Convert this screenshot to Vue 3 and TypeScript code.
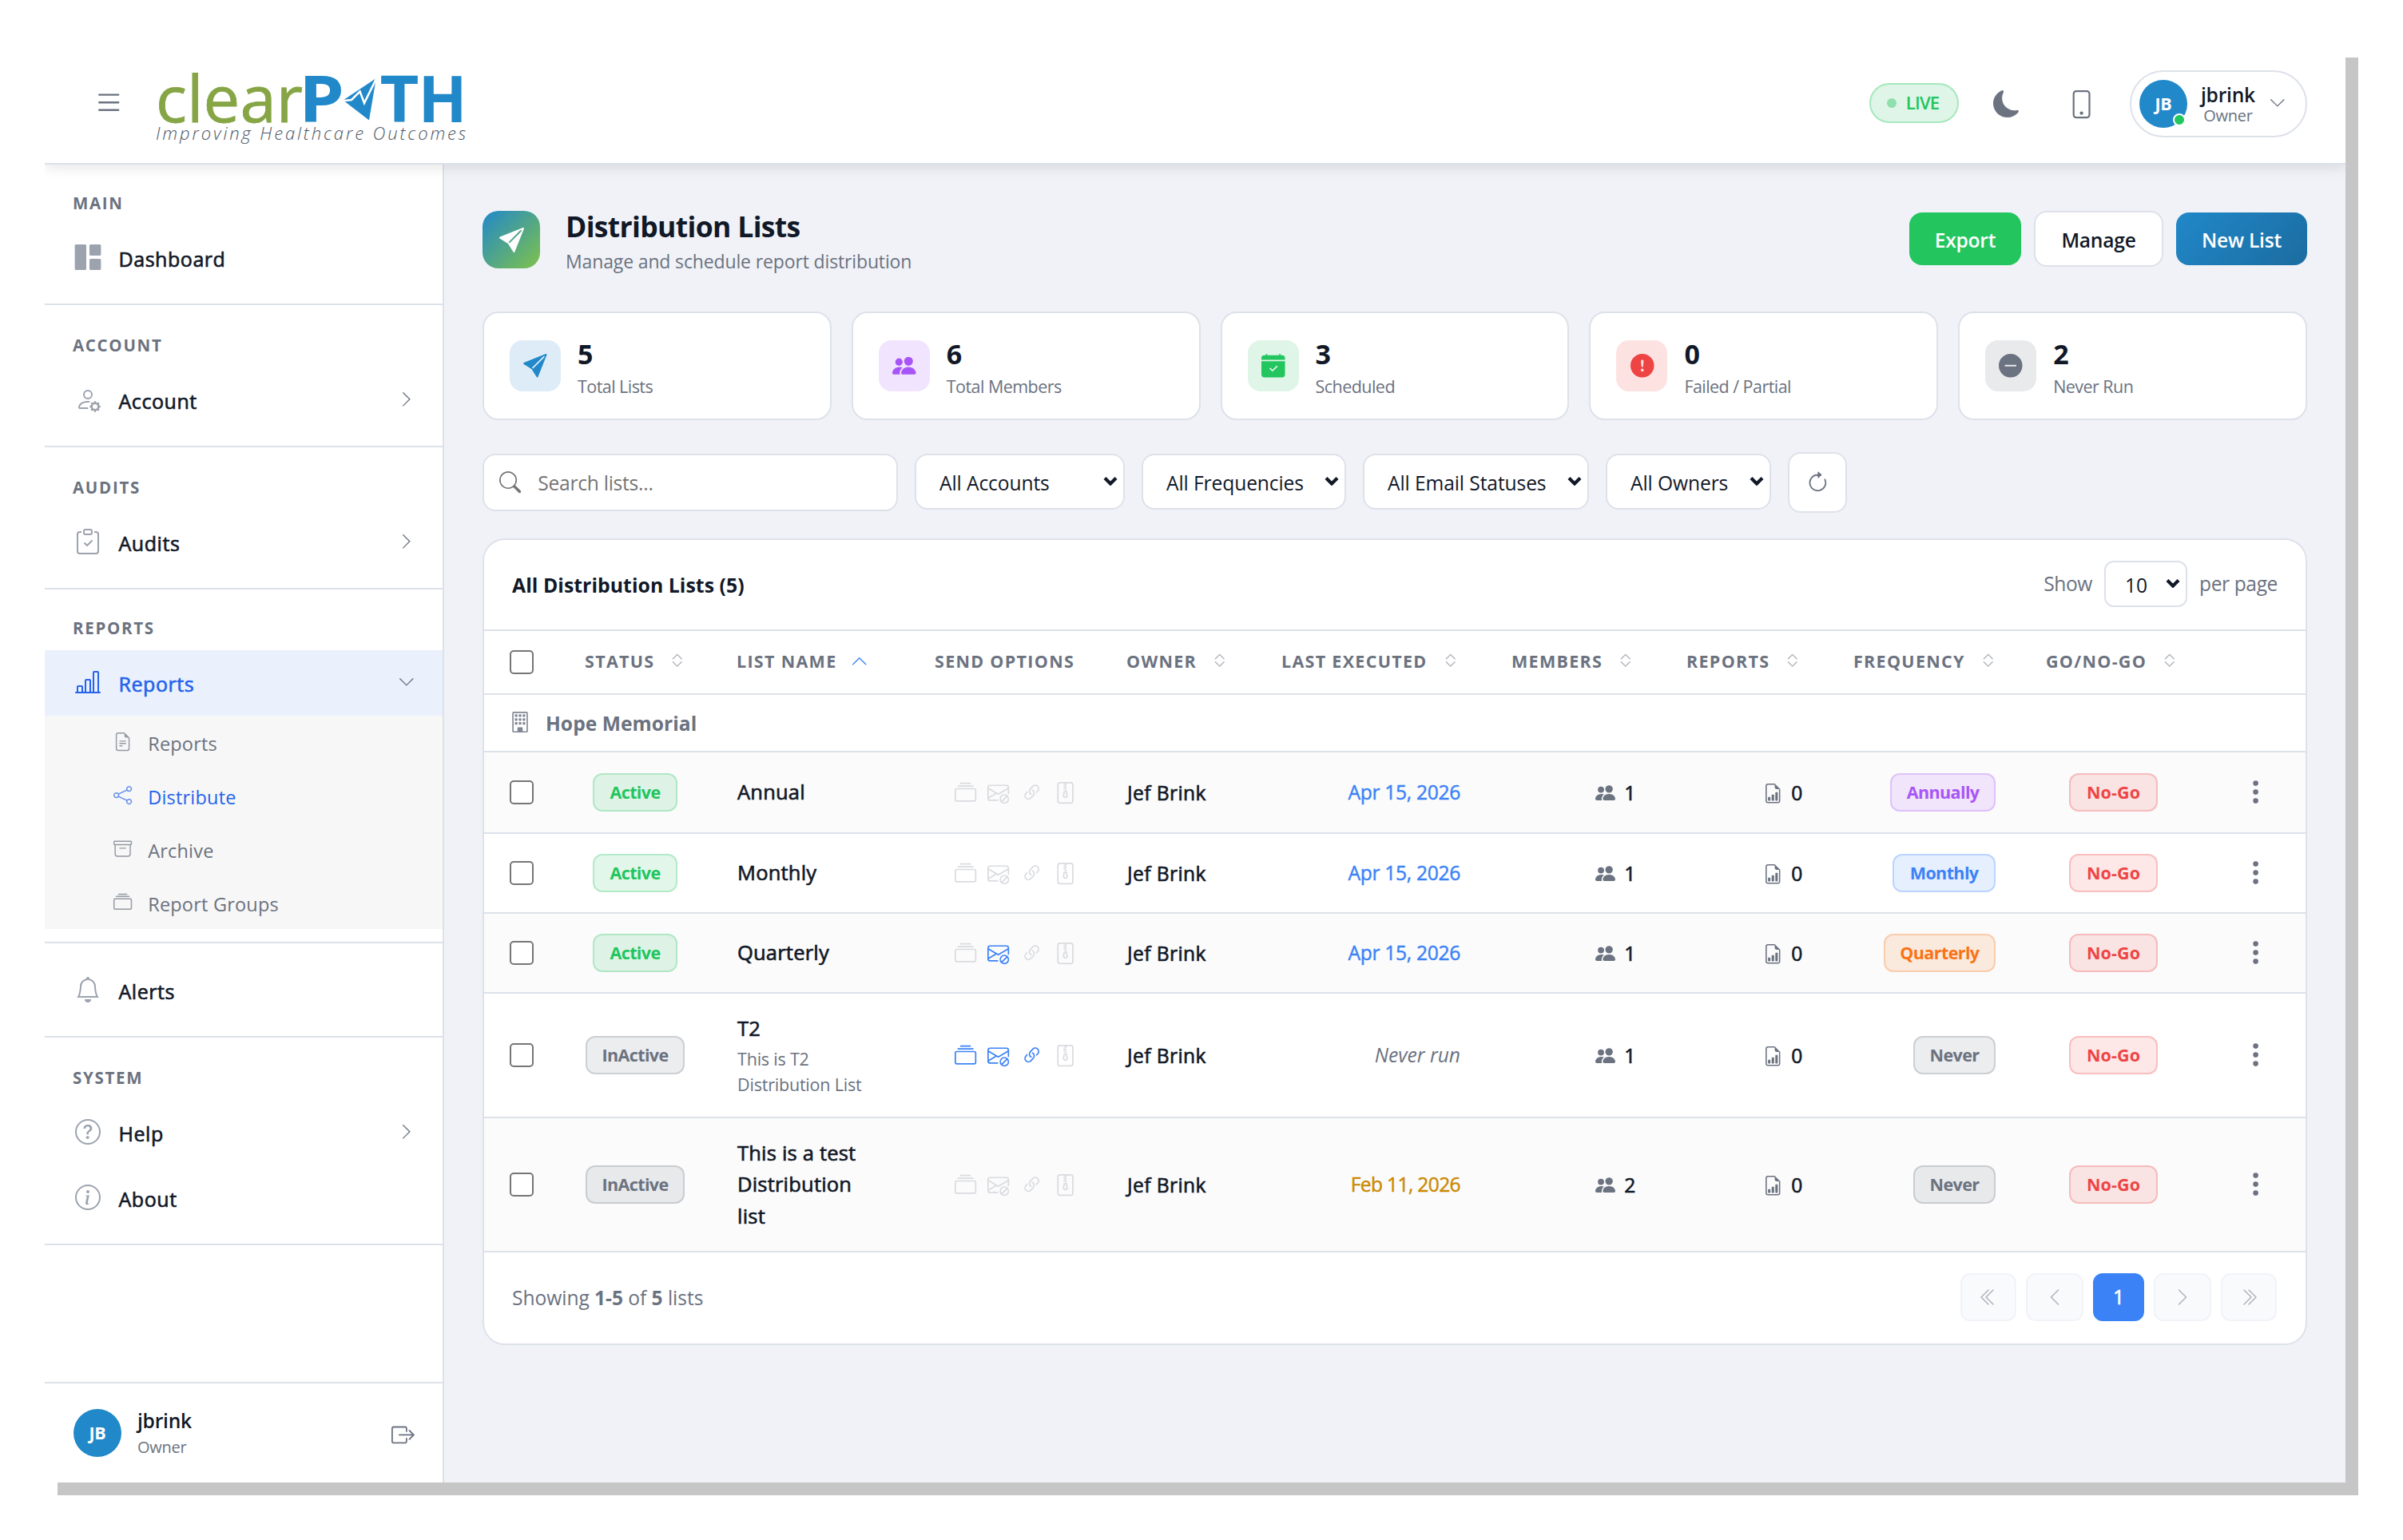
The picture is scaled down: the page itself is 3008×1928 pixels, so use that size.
<script setup lang="ts">
import { h } from 'vue'

const paths: Record<string, string> = {
  list: 'M2.5 12a.5.5 0 0 1 .5-.5h10a.5.5 0 0 1 0 1H3a.5.5 0 0 1-.5-.5m0-4a.5.5 0 0 1 .5-.5h10a.5.5 0 0 1 0 1H3a.5.5 0 0 1-.5-.5m0-4a.5.5 0 0 1 .5-.5h10a.5.5 0 0 1 0 1H3a.5.5 0 0 1-.5-.5',
  moon: 'M6 .278a.77.77 0 0 1 .08.858 7.2 7.2 0 0 0-.878 3.46c0 4.021 3.278 7.277 7.318 7.277q.792-.001 1.533-.16a.79.79 0 0 1 .81.316.73.73 0 0 1-.031.893A8.35 8.35 0 0 1 8.344 16C3.734 16 0 12.286 0 7.71 0 4.266 2.114 1.312 5.124.06A.75.75 0 0 1 6 .278',
  phone: 'M11 1a1 1 0 0 1 1 1v12a1 1 0 0 1-1 1H5a1 1 0 0 1-1-1V2a1 1 0 0 1 1-1zM5 0a2 2 0 0 0-2 2v12a2 2 0 0 0 2 2h6a2 2 0 0 0 2-2V2a2 2 0 0 0-2-2zM8 14a1 1 0 1 0 0-2 1 1 0 0 0 0 2',
  down: 'M1.646 4.646a.5.5 0 0 1 .708 0L8 10.293l5.646-5.647a.5.5 0 0 1 .708.708l-6 6a.5.5 0 0 1-.708 0l-6-6a.5.5 0 0 1 0-.708',
  up: 'M7.646 4.646a.5.5 0 0 1 .708 0l6 6a.5.5 0 0 1-.708.708L8 5.707l-5.646 5.647a.5.5 0 0 1-.708-.708z',
  right: 'M4.646 1.646a.5.5 0 0 1 .708 0l6 6a.5.5 0 0 1 0 .708l-6 6a.5.5 0 0 1-.708-.708L10.293 8 4.646 2.354a.5.5 0 0 1 0-.708',
  left: 'M11.354 1.646a.5.5 0 0 1 0 .708L5.707 8l5.647 5.646a.5.5 0 0 1-.708.708l-6-6a.5.5 0 0 1 0-.708l6-6a.5.5 0 0 1 .708 0',
  first: 'M8.354 1.646a.5.5 0 0 1 0 .708L2.707 8l5.647 5.646a.5.5 0 0 1-.708.708l-6-6a.5.5 0 0 1 0-.708l6-6a.5.5 0 0 1 .708 0M12.354 1.646a.5.5 0 0 1 0 .708L6.707 8l5.647 5.646a.5.5 0 0 1-.708.708l-6-6a.5.5 0 0 1 0-.708l6-6a.5.5 0 0 1 .708 0',
  last: 'M3.646 1.646a.5.5 0 0 1 .708 0l6 6a.5.5 0 0 1 0 .708l-6 6a.5.5 0 0 1-.708-.708L9.293 8 3.646 2.354a.5.5 0 0 1 0-.708M7.646 1.646a.5.5 0 0 1 .708 0l6 6a.5.5 0 0 1 0 .708l-6 6a.5.5 0 0 1-.708-.708L13.293 8 7.646 2.354a.5.5 0 0 1 0-.708',
  expand: 'M3.646 9.146a.5.5 0 0 1 .708 0L8 12.793l3.646-3.647a.5.5 0 0 1 .708.708l-4 4a.5.5 0 0 1-.708 0l-4-4a.5.5 0 0 1 0-.708m0-2.292a.5.5 0 0 0 .708 0L8 3.207l3.646 3.647a.5.5 0 0 0 .708-.708l-4-4a.5.5 0 0 0-.708 0l-4 4a.5.5 0 0 0 0 .708',
  dashboard: 'M.6 0h5.6a.8.8 0 0 1 .8.8v14.4a.8.8 0 0 1-.8.8H.6a.8.8 0 0 1-.8-.8V.8A.8.8 0 0 1 .6 0M9.8 0h5.6a.8.8 0 0 1 .8.8v5.4a.8.8 0 0 1-.8.8H9.8a.8.8 0 0 1-.8-.8V.8a.8.8 0 0 1 .8-.8M9.8 9h5.6a.8.8 0 0 1 .8.8v5.4a.8.8 0 0 1-.8.8H9.8a.8.8 0 0 1-.8-.8V9.8a.8.8 0 0 1 .8-.8',
  account: 'M11 5a3 3 0 1 1-6 0 3 3 0 0 1 6 0M8 7a2 2 0 1 0 0-4 2 2 0 0 0 0 4m.256 7a4.5 4.5 0 0 1-.229-1.004H3c.001-.246.154-.986.832-1.664C4.484 10.68 5.711 10 8 10q.39 0 .74.025c.226-.341.496-.65.804-.918Q8.844 9.002 8 9c-5 0-6 3-6 4s1 1 1 1zm3.63-4.54c.18-.613 1.048-.613 1.229 0l.043.148a.64.64 0 0 0 .921.382l.136-.074c.561-.306 1.175.308.87.869l-.075.136a.64.64 0 0 0 .382.92l.149.045c.612.18.612 1.048 0 1.229l-.15.043a.64.64 0 0 0-.38.921l.074.136c.305.561-.309 1.175-.87.87l-.136-.075a.64.64 0 0 0-.92.382l-.045.149c-.18.612-1.048.612-1.229 0l-.043-.15a.64.64 0 0 0-.921-.38l-.136.074c-.561.305-1.175-.309-.87-.87l.075-.136a.64.64 0 0 0-.382-.92l-.148-.045c-.613-.18-.613-1.048 0-1.229l.148-.043a.64.64 0 0 0 .382-.921l-.074-.136c-.306-.561.308-1.175.869-.87l.136.075a.64.64 0 0 0 .92-.382zM14 12.5a1.5 1.5 0 1 0-3 0 1.5 1.5 0 0 0 3 0',
  audits: 'M10.854 7.146a.5.5 0 0 1 0 .708l-3 3a.5.5 0 0 1-.708 0l-1.5-1.5a.5.5 0 1 1 .708-.708L7.5 9.793l2.646-2.647a.5.5 0 0 1 .708 0M4 1.5H3a2 2 0 0 0-2 2V14a2 2 0 0 0 2 2h10a2 2 0 0 0 2-2V3.5a2 2 0 0 0-2-2h-1v1h1a1 1 0 0 1 1 1V14a1 1 0 0 1-1 1H3a1 1 0 0 1-1-1V3.5a1 1 0 0 1 1-1h1zM9.5 1a.5.5 0 0 1 .5.5v1a.5.5 0 0 1-.5.5h-3a.5.5 0 0 1-.5-.5v-1a.5.5 0 0 1 .5-.5zm-3-1A1.5 1.5 0 0 0 5 1.5v1A1.5 1.5 0 0 0 6.5 4h3A1.5 1.5 0 0 0 11 2.5v-1A1.5 1.5 0 0 0 9.5 0z',
  chart: 'M11 2a1 1 0 0 1 1-1h2a1 1 0 0 1 1 1v12h.5a.5.5 0 0 1 0 1H.5a.5.5 0 0 1 0-1H1v-3a1 1 0 0 1 1-1h2a1 1 0 0 1 1 1v3h1V7a1 1 0 0 1 1-1h2a1 1 0 0 1 1 1v7h1zm1 12h2V2h-2zm-3 0V7H7v7zm-5 0v-3H2v3z',
  file: 'M5.5 7a.5.5 0 0 0 0 1h5a.5.5 0 0 0 0-1zM5 9.5a.5.5 0 0 1 .5-.5h5a.5.5 0 0 1 0 1h-5a.5.5 0 0 1-.5-.5m0 2a.5.5 0 0 1 .5-.5h2a.5.5 0 0 1 0 1h-2a.5.5 0 0 1-.5-.5M9.5 0H4a2 2 0 0 0-2 2v12a2 2 0 0 0 2 2h8a2 2 0 0 0 2-2V4.5zm0 1v2A1.5 1.5 0 0 0 11 4.5h2V14a1 1 0 0 1-1 1H4a1 1 0 0 1-1-1V2a1 1 0 0 1 1-1z',
  share: 'M13.5 1a1.5 1.5 0 1 0 0 3 1.5 1.5 0 0 0 0-3M11 2.5a2.5 2.5 0 1 1 .603 1.628l-6.718 3.12a2.5 2.5 0 0 1 0 1.504l6.718 3.12a2.5 2.5 0 1 1-.488.876l-6.718-3.12a2.5 2.5 0 1 1 0-3.256l6.718-3.12A2.5 2.5 0 0 1 11 2.5m-8.5 4a1.5 1.5 0 1 0 0 3 1.5 1.5 0 0 0 0-3m11 5.5a1.5 1.5 0 1 0 0 3 1.5 1.5 0 0 0 0-3',
  archive: 'M0 2a1 1 0 0 1 1-1h14a1 1 0 0 1 1 1v2a1 1 0 0 1-1 1v7.5a2.5 2.5 0 0 1-2.5 2.5h-9A2.5 2.5 0 0 1 1 12.5V5a1 1 0 0 1-1-1zm2 3v7.5A1.5 1.5 0 0 0 3.5 14h9a1.5 1.5 0 0 0 1.5-1.5V5zm13-3H1v2h14zM5 7.5a.5.5 0 0 1 .5-.5h5a.5.5 0 0 1 0 1h-5a.5.5 0 0 1-.5-.5',
  collection: 'M2.5 3.5a.5.5 0 0 1 0-1h11a.5.5 0 0 1 0 1zm2-2a.5.5 0 0 1 0-1h7a.5.5 0 0 1 0 1zM0 13a1.5 1.5 0 0 0 1.5 1.5h13A1.5 1.5 0 0 0 16 13V6a1.5 1.5 0 0 0-1.5-1.5h-13A1.5 1.5 0 0 0 0 6zm1.5.5A.5.5 0 0 1 1 13V6a.5.5 0 0 1 .5-.5h13a.5.5 0 0 1 .5.5v7a.5.5 0 0 1-.5.5z',
  bell: 'M8 16a2 2 0 0 0 2-2H6a2 2 0 0 0 2 2M8 1.918l-.797.161A4 4 0 0 0 4 6c0 .628-.134 2.197-.459 3.742-.16.767-.376 1.566-.663 2.258h10.244c-.287-.692-.502-1.49-.663-2.258C12.134 8.197 12 6.628 12 6a4 4 0 0 0-3.203-3.92zM14.22 12c.223.447.481.801.78 1H1c.299-.199.557-.553.78-1C2.68 10.2 3 6.88 3 6c0-2.42 1.72-4.44 4.005-4.901a1 1 0 1 1 1.99 0A5 5 0 0 1 13 6c0 .88.32 4.2 1.22 6',
  help: 'M8 15A7 7 0 1 1 8 1a7 7 0 0 1 0 14m0 1A8 8 0 1 0 8 0a8 8 0 0 0 0 16M5.255 5.786a.237.237 0 0 0 .241.247h.825c.138 0 .248-.113.266-.25.09-.656.54-1.134 1.342-1.134.686 0 1.314.343 1.314 1.168 0 .635-.374.927-.965 1.371-.673.489-1.206 1.06-1.168 1.987l.003.217a.25.25 0 0 0 .25.246h.811a.25.25 0 0 0 .25-.25v-.105c0-.718.273-.927 1.01-1.486.609-.463 1.244-.977 1.244-2.056 0-1.511-1.276-2.241-2.673-2.241-1.267 0-2.655.59-2.75 2.286m1.557 5.763c0 .533.425.927 1.01.927.609 0 1.028-.394 1.028-.927 0-.552-.42-.94-1.029-.94-.584 0-1.009.388-1.009.94',
  info: 'M8 15A7 7 0 1 1 8 1a7 7 0 0 1 0 14m0 1A8 8 0 1 0 8 0a8 8 0 0 0 0 16M8.93 6.588l-2.29.287-.082.38.45.083c.294.07.352.176.288.469l-.738 3.468c-.194.897.105 1.319.808 1.319.545 0 1.178-.252 1.465-.598l.088-.416c-.2.176-.492.246-.686.246-.275 0-.375-.193-.304-.533zM9 4.5a1 1 0 1 1-2 0 1 1 0 0 1 2 0',
  logout: 'M10 12.5a.5.5 0 0 1-.5.5h-8a.5.5 0 0 1-.5-.5v-9a.5.5 0 0 1 .5-.5h8a.5.5 0 0 1 .5.5v2a.5.5 0 0 0 1 0v-2A1.5 1.5 0 0 0 9.5 2h-8A1.5 1.5 0 0 0 0 3.5v9A1.5 1.5 0 0 0 1.5 14h8a1.5 1.5 0 0 0 1.5-1.5v-2a.5.5 0 0 0-1 0zM15.854 8.354a.5.5 0 0 0 0-.708l-3-3a.5.5 0 0 0-.708.708L14.293 7.5H5.5a.5.5 0 0 0 0 1h8.793l-2.147 2.146a.5.5 0 0 0 .708.708z',
  send: 'M15.964.686a.5.5 0 0 0-.65-.65L.767 5.855H.766l-.452.18a.5.5 0 0 0-.082.887l.41.26.001.002 4.995 3.178 3.178 4.995.002.002.26.41a.5.5 0 0 0 .886-.083zm-1.833 1.89L6.637 10.07l-.215-.338a.5.5 0 0 0-.154-.154l-.338-.215 7.494-7.494 1.178-.471z',
  people: 'M7 14s-1 0-1-1 1-4 5-4 5 3 5 4-1 1-1 1zm4-6a3 3 0 1 0 0-6 3 3 0 0 0 0 6m-5.784 6A2.24 2.24 0 0 1 5 13c0-1.355.68-2.75 1.936-3.72A6.3 6.3 0 0 0 5 9c-4 0-5 3-5 4s1 1 1 1zM4.5 8a2.5 2.5 0 1 0 0-5 2.5 2.5 0 0 0 0 5',
  calendar: 'M4 .5a.5.5 0 0 0-1 0V1H2a2 2 0 0 0-2 2v1h16V3a2 2 0 0 0-2-2h-1V.5a.5.5 0 0 0-1 0V1H4zM16 14V5H0v9a2 2 0 0 0 2 2h12a2 2 0 0 0 2-2m-5.146-5.146-3 3a.5.5 0 0 1-.708 0l-1.5-1.5a.5.5 0 0 1 .708-.708L7.5 10.793l2.646-2.647a.5.5 0 0 1 .708.708',
  alert: 'M16 8A8 8 0 1 1 0 8a8 8 0 0 1 16 0M8 4a.905.905 0 0 0-.9.995l.35 3.507a.552.552 0 0 0 1.1 0l.35-3.507A.905.905 0 0 0 8 4m.002 6a1 1 0 1 0 0 2 1 1 0 0 0 0-2',
  dash: 'M16 8A8 8 0 1 1 0 8a8 8 0 0 1 16 0M4.5 7.5a.5.5 0 0 0 0 1h7a.5.5 0 0 0 0-1z',
  search: 'M11.742 10.344a6.5 6.5 0 1 0-1.397 1.398h-.001q.044.06.098.115l3.85 3.85a1 1 0 0 0 1.415-1.414l-3.85-3.85a1 1 0 0 0-.115-.1zM12 6.5a5.5 5.5 0 1 1-11 0 5.5 5.5 0 0 1 11 0',
  refresh: 'M8 3a5 5 0 1 0 4.546 2.914.5.5 0 0 1 .908-.417A6 6 0 1 1 8 2zM8 4.466V.534a.25.25 0 0 1 .41-.192l2.36 1.966c.12.1.12.284 0 .384L8.41 4.658A.25.25 0 0 1 8 4.466',
  building:
    'M2 1a1 1 0 0 1 1-1h10a1 1 0 0 1 1 1v14a1 1 0 0 1-1 1H3a1 1 0 0 1-1-1zm11 0H3v14h3v-2.5a.5.5 0 0 1 .5-.5h3a.5.5 0 0 1 .5.5V15h3z' +
    [2, 5, 8].map((y) => [4, 7, 10].map((x) => `M${x} ${y + 0.5}a.5.5 0 0 1 .5-.5h1a.5.5 0 0 1 .5.5v1a.5.5 0 0 1-.5.5h-1a.5.5 0 0 1-.5-.5z`).join('')).join(''),
  envelope: 'M2 2a2 2 0 0 0-2 2v8.01A2 2 0 0 0 2 14h5.5a.5.5 0 0 0 0-1H2a1 1 0 0 1-.966-.741l5.64-3.471L8 9.583l7-4.2V8.5a.5.5 0 0 0 1 0V4a2 2 0 0 0-2-2zm3.708 6.208L1 11.105V5.383zM1 4.217V4a1 1 0 0 1 1-1h12a1 1 0 0 1 1 1v.217l-7 4.2zM14.975 10.025a3.5 3.5 0 1 0-4.95 4.95 3.5 3.5 0 0 0 4.95-4.95m-4.243.707a2.5 2.5 0 0 1 3.147-.318l-3.465 3.465a2.5 2.5 0 0 1 .318-3.147m.39 3.854 3.464-3.465a2.501 2.501 0 0 1-3.465 3.465z',
  link: 'M4.715 6.542 3.343 7.914a3 3 0 1 0 4.243 4.243l1.828-1.829A3 3 0 0 0 8.586 5.5L8 6.086a1 1 0 0 0-.154.199 2 2 0 0 1 .861 3.337L6.88 11.45a2 2 0 1 1-2.83-2.83l.793-.792a4 4 0 0 1-.128-1.287zM6.586 4.672A3 3 0 0 0 7.414 9.5l.775-.776a2 2 0 0 1-.896-3.346L9.12 3.55a2 2 0 1 1 2.83 2.83l-.793.792c.112.42.155.855.128 1.287l1.372-1.372a3 3 0 1 0-4.243-4.243z',
  zip: 'M6.5 7.5a1 1 0 0 1 1-1h1a1 1 0 0 1 1 1v.938l.4 1.599a1 1 0 0 1-.416 1.074l-.93.62a1 1 0 0 1-1.109 0l-.93-.62a1 1 0 0 1-.415-1.074l.4-1.599zm2 0h-1v.938a1 1 0 0 1-.03.243l-.4 1.598.93.62.93-.62-.4-1.598a1 1 0 0 1-.03-.243zM2 2a2 2 0 0 1 2-2h8a2 2 0 0 1 2 2v12a2 2 0 0 1-2 2H4a2 2 0 0 1-2-2zm5.5-1H4a1 1 0 0 0-1 1v12a1 1 0 0 0 1 1h8a1 1 0 0 0 1-1V2a1 1 0 0 0-1-1H9v1H8v1h1v1H8v1h1v1H7.5V5h-1V4h1V3h-1V2h1z',
  report: 'M10 13.5a.5.5 0 0 0 .5.5h1a.5.5 0 0 0 .5-.5v-6a.5.5 0 0 0-.5-.5h-1a.5.5 0 0 0-.5.5zm-2.5.5a.5.5 0 0 1-.5-.5v-4a.5.5 0 0 1 .5-.5h1a.5.5 0 0 1 .5.5v4a.5.5 0 0 1-.5.5zm-3 0a.5.5 0 0 1-.5-.5v-2a.5.5 0 0 1 .5-.5h1a.5.5 0 0 1 .5.5v2a.5.5 0 0 1-.5.5zM14 14V4.5L9.5 0H4a2 2 0 0 0-2 2v12a2 2 0 0 0 2 2h8a2 2 0 0 0 2-2M9.5 3A1.5 1.5 0 0 0 11 4.5h2V14a1 1 0 0 1-1 1H4a1 1 0 0 1-1-1V2a1 1 0 0 1 1-1h5.5z',
  kebab: 'M9.5 13a1.5 1.5 0 1 1-3 0 1.5 1.5 0 0 1 3 0m0-5a1.5 1.5 0 1 1-3 0 1.5 1.5 0 0 1 3 0m0-5a1.5 1.5 0 1 1-3 0 1.5 1.5 0 0 1 3 0',
}
const evenOdd = new Set(['refresh'])

const Icon = (props: { name: string; size: number }) =>
  h('svg', { viewBox: '0 0 16 16', width: props.size, height: props.size, fill: 'currentColor', overflow: 'visible', 'aria-hidden': 'true' }, [
    h('path', { d: paths[props.name], 'fill-rule': evenOdd.has(props.name) ? 'evenodd' : 'nonzero' }),
  ])
Icon.props = ['name', 'size']

interface NavItem { label: string; icon: string; chevron?: string; active?: boolean; children?: { label: string; icon: string; active?: boolean }[] }
interface NavSection { title?: string; tight?: boolean; items: NavItem[] }

const sections: NavSection[] = [
  { title: 'MAIN', tight: true, items: [{ label: 'Dashboard', icon: 'dashboard' }] },
  { title: 'ACCOUNT', items: [{ label: 'Account', icon: 'account', chevron: 'right' }] },
  { title: 'AUDITS', items: [{ label: 'Audits', icon: 'audits', chevron: 'right' }] },
  {
    title: 'REPORTS',
    tight: true,
    items: [
      {
        label: 'Reports', icon: 'chart', chevron: 'down', active: true,
        children: [
          { label: 'Reports', icon: 'file' },
          { label: 'Distribute', icon: 'share', active: true },
          { label: 'Archive', icon: 'archive' },
          { label: 'Report Groups', icon: 'collection' },
        ],
      },
    ],
  },
  { items: [{ label: 'Alerts', icon: 'bell' }] },
  { title: 'SYSTEM', items: [{ label: 'Help', icon: 'help', chevron: 'right' }, { label: 'About', icon: 'info' }] },
]

const stats = [
  { value: 5, label: 'Total Lists', icon: 'send', tone: 'blue' },
  { value: 6, label: 'Total Members', icon: 'people', tone: 'purple' },
  { value: 3, label: 'Scheduled', icon: 'calendar', tone: 'green' },
  { value: 0, label: 'Failed / Partial', icon: 'alert', tone: 'red' },
  { value: 2, label: 'Never Run', icon: 'dash', tone: 'gray' },
]

const filters = [
  { label: 'All Accounts', width: 263 },
  { label: 'All Frequencies', width: 256 },
  { label: 'All Email Statuses', width: 283 },
  { label: 'All Owners', width: 207 },
]

const widths = [94, 190, 248, 240, 194, 288, 219, 209, 241, 233, 124]
const columns = [
  { label: 'STATUS', sort: 'expand' },
  { label: 'LIST NAME', sort: 'up' },
  { label: 'SEND OPTIONS' },
  { label: 'OWNER', sort: 'expand' },
  { label: 'LAST EXECUTED', sort: 'expand' },
  { label: 'MEMBERS', sort: 'expand' },
  { label: 'REPORTS', sort: 'expand' },
  { label: 'FREQUENCY', sort: 'expand' },
  { label: 'GO/NO-GO', sort: 'expand' },
]

const sendIcons = ['collection', 'envelope', 'link', 'zip']
const rows = [
  { height: 102, status: 'Active', name: 'Annual', on: [] as string[], date: 'Apr 15, 2026', dateTone: 'recent', members: 1, freq: 'Annually', freqTone: 'purple' },
  { height: 100, status: 'Active', name: 'Monthly', on: [], date: 'Apr 15, 2026', dateTone: 'recent', members: 1, freq: 'Monthly', freqTone: 'azure' },
  { height: 100, status: 'Active', name: 'Quarterly', on: ['envelope'], date: 'Apr 15, 2026', dateTone: 'recent', members: 1, freq: 'Quarterly', freqTone: 'orange' },
  { height: 156, status: 'InActive', name: 'T2', note: 'This is T2\nDistribution List', on: ['collection', 'envelope', 'link'], date: 'Never run', dateTone: 'never', members: 1, freq: 'Never', freqTone: 'gray' },
  { height: 168, status: 'InActive', name: 'This is a test\nDistribution\nlist', on: [], date: 'Feb 11, 2026', dateTone: 'stale', members: 2, freq: 'Never', freqTone: 'gray' },
]
</script>

<template>
  <div class="window">
    <header class="topbar">
      <button class="menu"><Icon name="list" :size="38.4" /></button>
      <svg class="logo" width="396" height="130" viewBox="0 0 396 130" role="img" aria-label="clearPATH">
        <text class="logo-clear" x="4" y="89.700" textLength="184" lengthAdjust="spacingAndGlyphs">clear</text>
        <text class="logo-path" x="183" y="89.700" textLength="57" lengthAdjust="spacingAndGlyphs">P</text>
        <path fill="#2188c9" d="M238.500 62.500 279.800 35 271 87.500z" />
        <path fill="none" stroke="#fff" stroke-width="2.600" d="M236 63.500 249 62 259.500 51.500 265 66 280.500 34.500" />
        <text class="logo-path" x="284.500" y="89.700" textLength="49" lengthAdjust="spacingAndGlyphs">T</text>
        <text class="logo-path" x="332.500" y="89.700">H</text>
        <text class="logo-tag" x="4" y="112" textLength="388" lengthAdjust="spacing">Improving Healthcare Outcomes</text>
      </svg>
      <div class="top-actions">
        <span class="live"><i class="live-dot"></i>LIVE</span>
        <Icon class="moon" name="moon" :size="34" />
        <Icon class="phone" name="phone" :size="35.2" />
        <div class="user-pill">
          <span class="avatar">JB<i class="presence"></i></span>
          <span class="who"><b>jbrink</b><small>Owner</small></span>
          <Icon class="pill-caret" name="down" :size="21.6" />
        </div>
      </div>
    </header>

    <div class="body">
      <aside class="sidebar">
        <nav>
          <section v-for="(s, i) in sections" :key="i" class="nav-section" :class="{ untitled: !s.title }">
            <h6 v-if="s.title" class="nav-title" :class="{ tight: s.tight }">{{ s.title }}</h6>
            <template v-for="item in s.items" :key="item.label">
              <a class="nav-item" :class="{ active: item.active }">
                <span class="nav-icon"><Icon :name="item.icon" :size="32" /></span>
                <span class="nav-label medium">{{ item.label }}</span>
                <Icon v-if="item.chevron" class="nav-chevron" :name="item.chevron" :size="21.6" />
              </a>
              <div v-if="item.children" class="subnav">
                <a v-for="c in item.children" :key="c.label" class="sub-item" :class="{ active: c.active }">
                  <Icon class="sub-icon" :name="c.icon" :size="23.2" /><span>{{ c.label }}</span>
                </a>
              </div>
            </template>
          </section>
        </nav>
        <div class="side-user">
          <span class="avatar">JB</span>
          <span class="who"><b>jbrink</b><small>Owner</small></span>
          <Icon class="logout" name="logout" :size="28.8" />
        </div>
      </aside>

      <main class="content">
        <div class="page-head">
          <span class="page-icon"><Icon name="send" :size="31" /></span>
          <div class="page-title">
            <h1>Distribution Lists</h1>
            <p>Manage and schedule report distribution</p>
          </div>
          <button class="btn export">Export</button>
          <button class="btn manage">Manage</button>
          <button class="btn create">New List</button>
        </div>

        <div class="stats">
          <div v-for="s in stats" :key="s.label" class="stat">
            <span class="stat-icon" :class="s.tone"><Icon :name="s.icon" :size="29.5" /></span>
            <div class="stat-text">
              <strong>{{ s.value }}</strong>
              <span class="stat-label">{{ s.label }}</span>
            </div>
          </div>
        </div>

        <div class="filters">
          <label class="search"><Icon name="search" :size="27.2" /><span>Search lists...</span></label>
          <div v-for="f in filters" :key="f.label" class="select" :style="{ width: f.width + 'px' }">
            <span>{{ f.label }}</span>
            <svg class="caret" width="18" height="12" viewBox="0 0 18 12"><path d="M2 2.500 9 9.500 16 2.500" /></svg>
          </div>
          <button class="refresh"><Icon name="refresh" :size="28.8" /></button>
        </div>

        <div class="card">
          <div class="card-head">
            <h2>All Distribution Lists (5)</h2>
            <div class="per-page">
              <span>Show</span>
              <div class="select small">
                <span>10</span>
                <svg class="caret" width="18" height="12" viewBox="0 0 18 12"><path d="M2 2.500 9 9.500 16 2.500" /></svg>
              </div>
              <span>per page</span>
            </div>
          </div>

          <table>
            <colgroup><col v-for="(w, i) in widths" :key="i" :style="{ width: w + 'px' }" /></colgroup>
            <thead>
              <tr>
                <th><i class="check"></i></th>
                <th v-for="c in columns" :key="c.label">
                  <div class="th"><span>{{ c.label }}</span><Icon v-if="c.sort" :class="c.sort" :name="c.sort" :size="21.5" /></div>
                </th>
                <th></th>
              </tr>
            </thead>
            <tbody>
              <tr class="group">
                <td colspan="11"><div><Icon name="building" :size="26" /><span>Hope Memorial</span></div></td>
              </tr>
              <tr v-for="(r, i) in rows" :key="r.name" :class="{ alt: i % 2 === 0 }" :style="{ height: r.height + 'px' }">
                <td><i class="check"></i></td>
                <td class="center status"><span class="badge" :class="r.status === 'Active' ? 'green' : 'gray'">{{ r.status }}</span></td>
                <td class="name-cell"><div class="name medium">{{ r.name }}</div><div v-if="r.note" class="note">{{ r.note }}</div></td>
                <td><div class="send-options"><Icon v-for="s in sendIcons" :key="s" :class="{ on: r.on.includes(s) }" :name="s" :size="27.2" /></div></td>
                <td class="owner medium">Jef Brink</td>
                <td class="date" :class="r.dateTone">{{ r.date }}</td>
                <td><div class="count medium"><Icon name="people" :size="25" />{{ r.members }}</div></td>
                <td><div class="count medium"><Icon name="report" :size="24.5" />0</div></td>
                <td class="end"><span class="badge" :class="r.freqTone">{{ r.freq }}</span></td>
                <td class="center"><span class="badge red">No-Go</span></td>
                <td class="kebab"><Icon name="kebab" :size="35.2" /></td>
              </tr>
            </tbody>
          </table>

          <div class="card-foot">
            <p>Showing <b>1-5</b> of <b>5</b> lists</p>
            <div class="pager">
              <button class="page-btn edge"><Icon name="first" :size="24" /></button>
              <button class="page-btn"><Icon name="left" :size="24" /></button>
              <button class="page-btn current medium">1</button>
              <button class="page-btn"><Icon name="right" :size="24" /></button>
              <button class="page-btn edge"><Icon name="last" :size="24" /></button>
            </div>
          </div>
        </div>
      </main>
    </div>
  </div>
</template>

<style>
html, body { margin: 0; background: #fff; }
#app { display: flow-root; padding-bottom: 72px; }
</style>

<style scoped>
* { box-sizing: border-box; }
svg { display: block; flex: none; }
button { font: inherit; letter-spacing: inherit; padding: 0; border: 0; background: none; color: inherit; }
h1, h2, h6, p { margin: 0; }

.window {
  width: 2880px;
  height: 1800px;
  margin: 56px 0 0 56px;
  background: #fff;
  box-shadow: 16px 16px 0 #c6c6c6;
  display: flex;
  flex-direction: column;
  font: 24.6px/1.4 "Open Sans", "Noto Sans", sans-serif;
  letter-spacing: -0.25px;
  color: #111827;
}
/* weight between regular and semibold */
.medium { -webkit-text-stroke: .65px currentColor; }

/* top bar */
.topbar {
  height: 150px;
  flex: none;
  display: flex;
  align-items: center;
  padding: 0 48px 0 60px;
  border-bottom: 2px solid #dde1ea;
  box-shadow: 0 4px 16px rgba(0, 0, 0, .1);
  clip-path: inset(0 0 -30px 0);
  position: relative;
  z-index: 1;
  background: #fff;
}
.menu { color: #6b7280; margin: -3px 0 0 1px; }
.logo { margin: -5px 0 0 36px; }
.logo-clear, .logo-path { font: 80px "Open Sans", sans-serif; letter-spacing: 0; }
.logo-clear { fill: #86a545; stroke: #86a545; stroke-width: .8px; }
.logo-path { fill: #2188c9; font-weight: 700; }
.logo-tag { font: italic 300 22px "Open Sans", sans-serif; fill: #4b5563; }
.top-actions { margin: -1px 0 0 auto; display: flex; align-items: center; color: #6b7280; }
.live {
  height: 50px;
  width: 112px;
  display: flex;
  align-items: center;
  padding: 0 0 2px 20px;
  gap: 12px;
  margin-top: -1px;
  border: 2px solid #a5e8bd;
  border-radius: 25px;
  background: #def5e7;
  color: #22c55e;
  font-size: 22px;
  font-weight: 600;
  letter-spacing: -.8px;
}
.live-dot { width: 12px; height: 12px; border-radius: 50%; background: #8fe0ac; margin-top: 2px; }
.moon { margin-left: 43px; }
.phone { margin: 2px 0 0 59px; }
.user-pill {
  margin: 1px 0 0 43px;
  width: 222px;
  height: 84px;
  border: 2px solid #dde1ea;
  border-radius: 42px;
  display: flex;
  align-items: center;
  padding-left: 10px;
}
.pill-caret { margin-top: -2px; }
.avatar {
  width: 60px;
  height: 60px;
  border-radius: 50%;
  background: #2188c9;
  color: #fff;
  font-size: 21.5px;
  font-weight: 700;
  display: flex;
  align-items: center;
  justify-content: center;
  position: relative;
}
.presence {
  position: absolute;
  right: 2px;
  bottom: 2px;
  width: 16px;
  height: 16px;
  border: 2px solid #fff;
  border-radius: 50%;
  background: #22c55e;
}
.who { display: flex; flex-direction: column; }
.who b { font-weight: 600; color: #111827; line-height: 30px; }
.who small { font-size: 20px; line-height: 26px; color: #6b7280; }
.user-pill .who { align-items: center; margin: 0 17px 0 17px; }
.user-pill .who small { line-height: 22px; }

/* sidebar */
.body { flex: 1; display: flex; min-height: 0; }
.sidebar { width: 500px; border-right: 2px solid #dde1ea; background: #fff; display: flex; flex-direction: column; }
.nav-section { border-bottom: 2px solid #dde1ea; padding-bottom: 16px; }
.nav-section.untitled { padding-top: 18px; }
.nav-title {
  height: 78px;
  padding: 35px 35px 0;
  font-size: 20.5px;
  line-height: 30px;
  font-weight: 700;
  letter-spacing: 1.7px;
  color: #6b7280;
}
.nav-title.tight { height: 76px; padding-top: 33px; }
.nav-item { height: 82px; display: flex; align-items: center; padding: 0 35px 0 36px; }
.nav-item.active { background: #eaf1fd; color: #2563eb; }
.nav-label { margin-top: 3px; font-size: 25px; letter-spacing: .55px; }
.nav-icon { width: 36px; display: flex; justify-content: center; color: #9ca3af; margin: -2px 21px 0 -.5px; }
.nav-item.active .nav-icon { color: #2563eb; }
.nav-chevron { margin: -3px -.5px 0 auto; color: #6b7280; }
.subnav { background: #f7f7f7; }
.sub-item { height: 66.85px; display: flex; align-items: center; padding-left: 86px; gap: 20px; color: #6b7280; font-size: 23.5px; padding-top: 4px; letter-spacing: .2px; }
.sub-icon { opacity: .7; margin-top: -5px; }
.sub-item.active { color: #2563eb; }
.side-user { margin-top: auto; height: 126px; border-top: 2px solid #dde1ea; display: flex; align-items: center; padding: 0 35px 0 36px; }
.side-user .who { margin: 3px auto 0 20px; }
.side-user .who b { line-height: 32px; }
.side-user .who small { line-height: 34px; }
.logout { color: #6b7280; margin-top: 4px; }

/* content */
.content { flex: 1; background: #f0f2f7; padding: 58px 48px 0; display: flex; flex-direction: column; }
.page-head { height: 72px; display: flex; align-items: center; gap: 16px; }
.page-icon {
  width: 72px;
  height: 72px;
  border-radius: 20px;
  background: linear-gradient(135deg, #2188c9, #7fc24b);
  color: #fff;
  display: flex;
  align-items: center;
  justify-content: center;
}
.page-title { flex: 1; margin-left: 16px; }
.page-title h1 { font-size: 35.5px; line-height: 46px; font-weight: 700; letter-spacing: -.65px; margin-top: 1px; }
.page-title p { font-size: 23px; line-height: 42px; color: #6b7280; margin-bottom: -6px; letter-spacing: -.14px; }
.btn { height: 66px; border-radius: 16px; font-weight: 600; margin-top: -2px; padding-top: 4px; }
.export { width: 140px; background: #22c55e; color: #fff; }
.manage { width: 162px; height: 70px; border: 2px solid #dde1ea; background: #fff; }
.create { width: 164px; background: linear-gradient(135deg, #2188c9, #1b6ca0); color: #fff; }

.stats { margin-top: 54px; display: grid; grid-template-columns: repeat(5, 1fr); gap: 25px; }
.stat { height: 136px; border: 2px solid #dde1ea; border-radius: 20px; background: #fff; display: flex; align-items: center; padding-left: 32px; gap: 21px; }
.stat-icon { width: 64px; height: 64px; border-radius: 16px; display: flex; align-items: center; justify-content: center; }
.stat-icon.blue { background: #deecf8; color: #2188c9; }
.stat-icon.purple { background: #f1e4fe; color: #a855f7; }
.stat-icon.green { background: #def5e7; color: #22c55e; }
.stat-icon.red { background: #fde2e2; color: #ef4444; }
.stat-icon.gray { background: #e9eaec; color: #6b7280; }
.stat-text { margin-top: 8px; }
.stat strong { display: block; font-size: 34px; line-height: 40px; }
.stat-label { display: block; font-size: 21.5px; line-height: 36px; color: #6b7280; margin-top: 3px; letter-spacing: -.55px; }

.filters { margin-top: 40px; height: 76px; display: flex; align-items: center; gap: 21px; }
.search { width: 520px; height: 72px; border: 2px solid #dde1ea; border-radius: 16px; background: #fff; color: #757575; display: flex; align-items: center; padding-left: 19px; gap: 21px; }
.search span { margin-top: 2px; }
.select {
  height: 70px;
  margin-top: -2px;
  border: 2px solid #dde1ea;
  border-radius: 16px;
  background: #fff;
  display: flex;
  align-items: center;
  justify-content: space-between;
  padding: 4px 7px 0 29px;
  letter-spacing: -.1px;
}
.caret { margin-top: -7px; fill: none; stroke: #111827; stroke-width: 4.2; }
.refresh { width: 74px; height: 76px; border: 2px solid #dde1ea; border-radius: 16px; background: #fff; color: #6b7280; display: flex; align-items: center; justify-content: center; }

.card { margin-top: 32px; border: 2px solid #dde1ea; border-radius: 28px; background: #fff; overflow: hidden; }
.card-head { height: 114px; border-bottom: 2px solid #dde1ea; display: flex; align-items: center; justify-content: space-between; padding: 0 35px 0 35px; }
.card-head h2 { font-size: 24.8px; font-weight: 700; letter-spacing: .05px; padding-top: 1px; }
.per-page { display: flex; align-items: center; gap: 15px; color: #6b7280; letter-spacing: -.4px; margin-top: -2px; }
.select.small { width: 104px; height: 58px; margin-top: 0; border-radius: 12px; padding: 4px 7px 0 24px; color: #111827; }

table { width: 100%; table-layout: fixed; border-collapse: separate; border-spacing: 0; }
th, td { padding: 0 32px; border-bottom: 2px solid #dde1ea; text-align: left; vertical-align: middle; }
thead th { height: 80px; font-size: 21.5px; font-weight: 700; color: #6b7280; letter-spacing: 1.3px; white-space: nowrap; }
.th { display: flex; align-items: center; gap: 18px; margin-top: -2px; }
.th .expand { opacity: .55; margin-top: -2px; }
.th .up { color: #3b82f6; }
.check { display: block; width: 30px; height: 30px; border: 2px solid #767676; border-radius: 5px; background: #fff; }
.group td { height: 72px; color: #6b7280; font-weight: 700; letter-spacing: .05px; }
.group td div { display: flex; align-items: center; gap: 19px; }
.group span { margin-top: 3px; }
.group svg { opacity: .85; margin-top: -2px; }
.alt td { background: #fbfbfb; }
td.center { text-align: center; }
td.center, td.end { padding: 0; }
td.end { text-align: right; padding-right: 31px; }
.badge {
  display: inline-flex;
  align-items: center;
  height: 48px;
  padding: 0 18.5px;
  border: 2px solid;
  border-radius: 12px;
  font-size: 21.5px;
  font-weight: 700;
  letter-spacing: -.6px;
  vertical-align: middle;
}
.badge.green { padding: 0 19.5px; color: #22c55e; background: rgba(34, 197, 94, .13); border-color: rgba(34, 197, 94, .25); }
.badge.gray { color: #6b7280; background: rgba(107, 114, 128, .13); border-color: rgba(107, 114, 128, .25); }
.badge.purple { color: #a855f7; background: rgba(168, 85, 247, .13); border-color: rgba(168, 85, 247, .25); }
.badge.azure { padding: 0 19.5px; color: #3b82f6; background: rgba(59, 130, 246, .13); border-color: rgba(59, 130, 246, .25); }
.badge.orange { color: #f97316; background: rgba(249, 115, 22, .13); border-color: rgba(249, 115, 22, .25); }
.badge.red { padding: 0 19.5px; letter-spacing: .1px; color: #ef4444; background: rgba(239, 68, 68, .13); border-color: rgba(239, 68, 68, .25); }
.name-cell { padding-left: 33px; }
.name { font-size: 25.5px; line-height: 39.2px; white-space: pre-line; letter-spacing: .2px; }
.note { font-size: 21.5px; line-height: 32.3px; color: #6b7280; white-space: pre-line; padding-top: 3px; letter-spacing: -.2px; }
.send-options { display: flex; gap: 14.6px; padding: 1px 0 0 24.5px; color: #d9dbdf; }
.send-options .on { color: #3b82f6; }
.owner { letter-spacing: .4px; padding: 3px 0 0 33px; }
.date { text-align: right; padding-top: 1px; letter-spacing: -.3px; }
.recent, .stale { -webkit-text-stroke: .45px currentColor; }
.recent { color: #3b82f6; }
.stale { color: #ca8a04; letter-spacing: -.65px; }
.never { color: #6b7280; font-style: italic; letter-spacing: 0; }
.count { display: flex; align-items: center; justify-content: flex-end; gap: 11px; padding-top: 2px; }
.count svg { color: #6b7280; }
.kebab { padding: 0 0 0 44px; color: #6b7280; }

.card-foot { height: 114px; display: flex; align-items: center; justify-content: space-between; padding: 0 36px 0 35px; color: #6b7280; letter-spacing: -.05px; }
.pager { display: flex; gap: 12px; margin-top: -2px; }
.page-btn { width: 72px; height: 60px; border: 2px solid #f1f3f8; border-radius: 12px; background: #f9fafc; color: #b0b3ba; display: flex; align-items: center; justify-content: center; }
.page-btn.edge { width: 70px; }
.page-btn.current { width: 64px; border-color: #3b82f6; background: #3b82f6; color: #fff; }
</style>
